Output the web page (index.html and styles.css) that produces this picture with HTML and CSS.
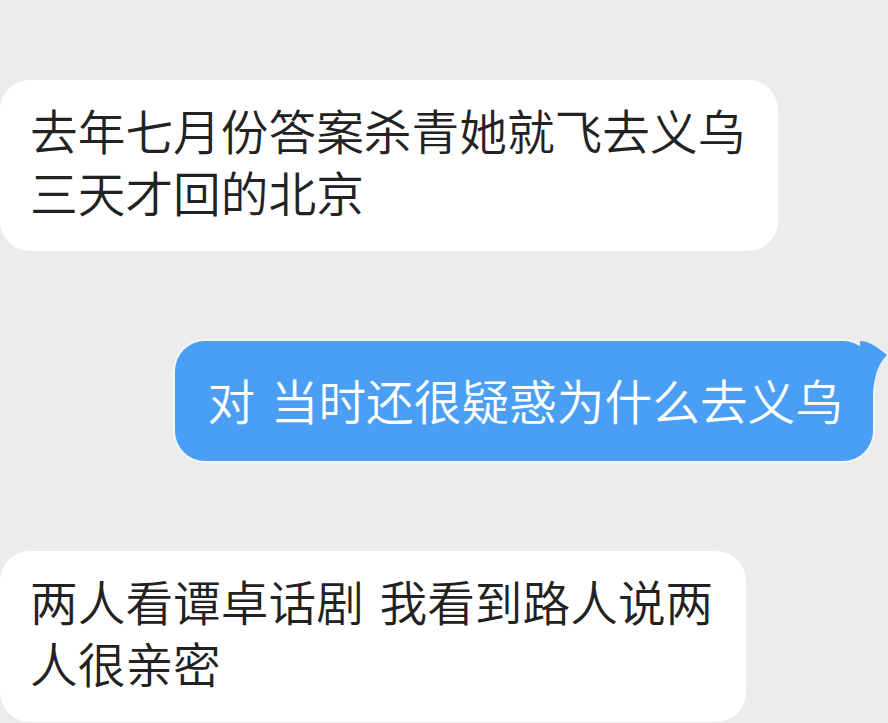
FILE: index.html
```html
<!DOCTYPE html>
<html lang="zh-CN">
<head>
    <meta charset="UTF-8">
    <meta name="viewport" content="width=device-width, initial-scale=1.0">
    <title>聊天记录</title>
    <link rel="stylesheet" href="styles.css">
</head>
<body>
    <div class="chat">
        <!-- 对方的消息 -->
        <div class="bubble bubble-left">去年七月份答案杀青她就飞去义乌<br>三天才回的北京</div>

        <!-- 自己的消息 -->
        <div class="bubble bubble-right">
            对 当时还很疑惑为什么去义乌
            <svg class="tail" width="28" height="60" viewBox="0 0 28 60">
                <path d="M0 0 C9 0 17 6 27 14 C19 22 13 34 13 60 L0 60 Z" fill="#4a9ff4"/>
            </svg>
        </div>

        <div class="bubble bubble-left">两人看谭卓话剧 我看到路人说两<br>人很亲密</div>
    </div>
</body>
</html>
```

FILE: styles.css
```css
body {
    margin: 0;
    background: #ececec;
    font-family: "Noto Sans CJK SC", "Noto Sans", sans-serif;
}
.chat {
    display: flex;
    flex-direction: column;
    padding-top: 80px;
    gap: 90px;
}
.bubble {
    position: relative;
    width: fit-content;
    font-size: 47.7px;
    font-weight: 350;
    line-height: 62px;
    word-spacing: 5px;
    border-radius: 30px;
    white-space: nowrap;
}
.bubble-left {
    background: #fff;
    color: #222;
    padding: 19px 33px 28px 30px;
}
.bubble-right {
    align-self: flex-end;
    margin-right: 15px;
    background: #4a9ff4;
    color: #fff;
    padding: 28px 30px 30px 32px;
    box-shadow: 0 0 0 2px #f3f6f9;
}
.tail {
    position: absolute;
    top: 0;
    right: -15px;
}
```
